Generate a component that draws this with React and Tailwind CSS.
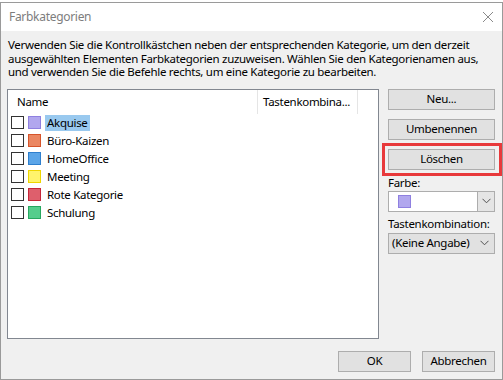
import React from "react";

const cats = [
  { name: "Akquise", fill: "#b1a7ee", border: "#8f80e0", sel: true },
  { name: "Büro-Kaizen", fill: "#eb8762", border: "#d6542a" },
  { name: "HomeOffice", fill: "#5ba5e8", border: "#2e7fce" },
  { name: "Meeting", fill: "#fff46c", border: "#eed600" },
  { name: "Rote Kategorie", fill: "#de5f6c", border: "#c62639" },
  { name: "Schulung", fill: "#55cd8c", border: "#27a75f" },
];

function Chevron() {
  return (
    <svg width="9" height="6" viewBox="0 0 9 6" fill="none">
      <path d="M0.5 0.8 L4.5 4.8 L8.5 0.8" stroke="#505050" strokeWidth="1" />
    </svg>
  );
}

function Btn({ children, className = "" }) {
  return (
    <div
      className={`flex items-center justify-center bg-[#e1e1e1] border border-[#adadad] text-black ${className}`}
    >
      {children}
    </div>
  );
}

export default function App() {
  return (
    <div
      className="w-[503px] h-[380px] bg-white pt-[2px] text-[11.5px] tracking-[-0.3px] text-black"
      style={{ fontFamily: '"Noto Sans", "Open Sans", sans-serif' }}
    >
      <div className="h-[378px] border border-[#9a9a9a] flex flex-col">
        <div className="h-[28px] bg-white flex items-center justify-between pl-[8px] pr-[8px] shrink-0">
          <span className="text-[#7d7d7d] text-[12px]">Farbkategorien</span>
          <svg width="12" height="12" viewBox="0 0 12 12">
            <path d="M1 1 L11 11 M11 1 L1 11" stroke="#8a8a8a" strokeWidth="1" />
          </svg>
        </div>
        <div className="flex-1 bg-[#f0f0f0] pl-[6px] pr-[6px] flex flex-col">
          <p className="mt-[7px] leading-[13.5px] pl-[1px]">
            Verwenden Sie die Kontrollkästchen neben der entsprechenden Kategorie, um den derzeit
            ausgewählten Elementen Farbkategorien zuzuweisen. Wählen Sie den Kategorienamen aus,
            und verwenden Sie die Befehle rechts, um eine Kategorie zu bearbeiten.
          </p>
          <div className="mt-[10px] flex">
            <div className="w-[372px] h-[250px] bg-white border border-[#828790] flex flex-col">
              <div className="h-[24px] flex shrink-0">
                <div className="w-[250px] border-r border-[#e5e5e5] flex items-center pl-[9px]">Name</div>
                <div className="w-[100px] border-r border-[#e5e5e5] flex items-center pl-[5px]">
                  Tastenkombina...
                </div>
              </div>
              {cats.map((c) => (
                <div key={c.name} className="h-[18px] flex items-center pl-[3px]">
                  <div className="w-[13px] h-[13px] border border-[#333333] bg-white" />
                  <div
                    className="ml-[4px] w-[13px] h-[13px] border"
                    style={{ background: c.fill, borderColor: c.border }}
                  />
                  <div
                    className={`ml-[4px] h-[16px] flex items-center px-[2px] ${c.sel ? "bg-[#99c9ef]" : ""}`}
                  >
                    {c.name}
                  </div>
                </div>
              ))}
            </div>
            <div className="ml-[9px] w-[107px] flex flex-col">
              <Btn className="h-[21px]">Neu...</Btn>
              <Btn className="h-[21px] mt-[9px]">Umbenennen</Btn>
              <div className="mt-[3px] -ml-[6px] -mr-[7px] border-[3px] border-[#e8393b] pl-[3px] pr-[4px] py-[3px]">
                <Btn className="h-[21px]">Löschen</Btn>
              </div>
              <div className="mt-[0px] leading-[14px]">Farbe:</div>
              <div className="mt-[1px] h-[21px] bg-white border border-[#adadad] flex">
                <div className="flex-1 flex items-center pl-[9px]">
                  <div className="w-[13px] h-[13px] bg-[#b1a7ee] border border-[#8f80e0]" />
                </div>
                <div className="w-[17px] bg-[#e5e5e5] border-l border-[#adadad] flex items-center justify-center">
                  <Chevron />
                </div>
              </div>
              <div className="mt-[5px] leading-[14px]">Tastenkombination:</div>
              <div className="mt-[2px] h-[21px] bg-[#e1e1e1] border border-[#adadad] flex items-center justify-between pl-[3px] pr-[5px]">
                <span>(Keine Angabe)</span>
                <Chevron />
              </div>
            </div>
          </div>
          <div className="mt-[12px] flex justify-end gap-[11px] pr-[1px]">
            <Btn className="w-[73px] h-[21px]">OK</Btn>
            <Btn className="w-[73px] h-[21px]">Abbrechen</Btn>
          </div>
        </div>
      </div>
    </div>
  );
}
